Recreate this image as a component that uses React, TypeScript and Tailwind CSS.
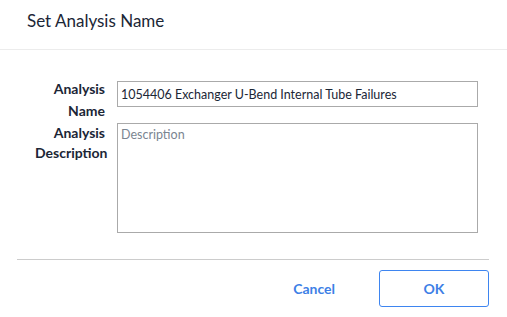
import React from 'react';

const font = { fontFamily: 'Lato, "Noto Sans", sans-serif' };

export default function App() {
  return (
    <div className="w-[507px] h-[317px] bg-white text-[#1b2636] overflow-hidden" style={font}>
      <div className="h-[50px] border-b border-[#ececec] pl-[27px] pt-[9px]">
        <h1 className="text-[17px] leading-[24px]">Set Analysis Name</h1>
      </div>

      <div className="pl-[17px] pr-[18px] pt-[31px]">
        <div className="flex items-start gap-[12px] mr-[11px]">
          <label className="w-[88px] pl-[18px] text-right text-[14px] font-bold leading-[22px] -mt-[3px]">
            Analysis Name
          </label>
          <input
            className="flex-1 h-[26px] border border-[#aaaaaa] px-[3px] text-[12.5px] text-[#1b2636] outline-none"
            defaultValue="1054406 Exchanger U-Bend Internal Tube Failures"
          />
        </div>
        <div className="flex items-start gap-[12px] mt-[1px] mr-[11px]">
          <label className="w-[88px] pl-[18px] text-right text-[14px] font-bold leading-[20px]">
            Analysis Description
          </label>
          <textarea
            className="flex-1 h-[110px] border border-[#aaaaaa] px-[3px] py-[2px] text-[12.5px] resize-none outline-none placeholder:text-[#7a8591]"
            placeholder="Description"
          />
        </div>
        <div className="mt-[26px] border-t border-[#cccccc]" />
        <div className="flex justify-end items-center gap-[44px] pt-[10px]">
          <button className="text-[14px] font-bold text-[#3e7fe6]">Cancel</button>
          <button className="w-[110px] h-[37px] rounded-[3px] border border-[#3e85f0] text-[14px] font-bold text-[#3e7fe6]">
            OK
          </button>
        </div>
      </div>
    </div>
  );
}
